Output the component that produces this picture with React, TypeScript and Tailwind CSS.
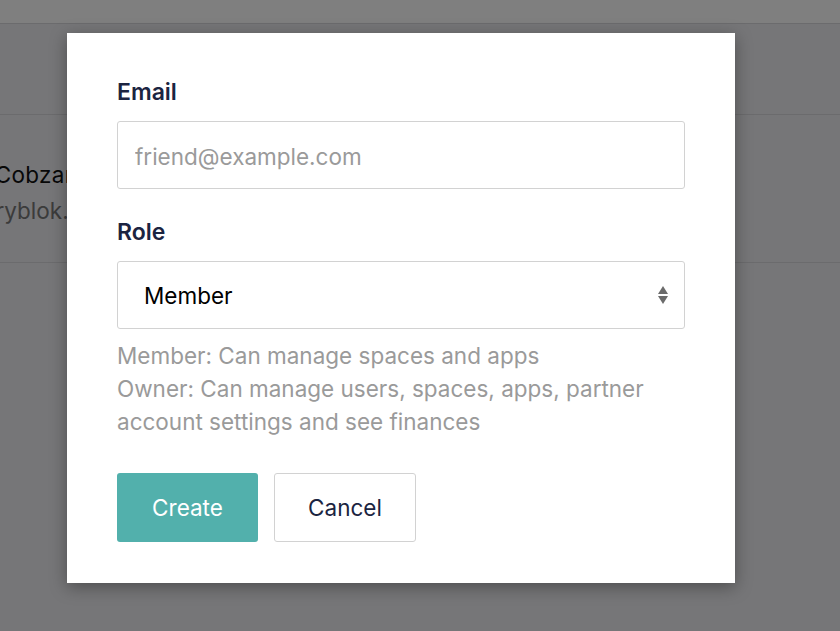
import React from "react";

export default function App() {
  return (
    <div
      className="relative w-[840px] h-[631px] overflow-hidden bg-[#ececf0]"
      style={{ fontFamily: "Inter, 'Noto Sans', sans-serif" }}
    >
      {/* underlying page */}
      <div className="h-[24px] bg-white border-b border-[#d6d6da]" />
      <div className="h-[91px] border-b border-[#d6d6da]" />
      <div className="h-[148px] border-b border-[#d6d6da] flex flex-col justify-center pt-[8px]">
        <div className="ml-[-55px] text-[22.5px] leading-[36px] text-[#111] whitespace-nowrap tracking-[0.3px]">Dan Cobzaru</div>
        <div className="ml-[-37px] text-[22.5px] leading-[36px] text-[#777] whitespace-nowrap">storyblok.com</div>
      </div>

      {/* overlay */}
      <div className="absolute inset-0 bg-black/50" />

      {/* modal */}
      <div className="absolute left-[67px] top-[33px] w-[668px] h-[550px] bg-white shadow-[0_4px_16px_rgba(0,0,0,0.35)] px-[50px] pt-[44px]">
        <label className="block text-[23px] leading-[30px] font-semibold text-[#1b2441]">Email</label>
        <input
          className="mt-[14px] block w-full h-[68px] rounded-[3px] border border-[#d2d2d2] px-[17px] pt-[2px] text-[22.5px] outline-none placeholder:text-[#9a9a9a]"
          placeholder="friend@example.com"
        />
        <label className="mt-[28px] block text-[23px] leading-[30px] font-semibold text-[#1b2441]">Role</label>
        <div className="relative mt-[14px] h-[68px] rounded-[3px] border border-[#d2d2d2] flex items-center pl-[26px] pt-[2px]">
          <span className="text-[22.5px] text-black">Member</span>
          <svg className="absolute right-[15px] top-[23px]" width="12" height="20" viewBox="0 0 12 20">
            <path d="M6 1 L11 9 L1 9 Z" fill="#6b6b6b" />
            <path d="M6 19 L11 11 L1 11 Z" fill="#6b6b6b" />
          </svg>
        </div>
        <div className="mt-[10px] text-[22.5px] leading-[33px] text-[#9a9a9a]">
          <div>Member: Can manage spaces and apps</div>
          <div>Owner: Can manage users, spaces, apps, partner</div>
          <div>account settings and see finances</div>
        </div>
        <div className="mt-[35px] flex gap-[16px]">
          <button className="w-[141px] h-[69px] rounded-[3px] bg-[#52b0ac] text-white text-[22.5px]">Create</button>
          <button className="w-[142px] h-[69px] rounded-[3px] border border-[#d2d2d2] bg-white text-[#1b2441] text-[22.5px]">Cancel</button>
        </div>
      </div>
    </div>
  );
}
